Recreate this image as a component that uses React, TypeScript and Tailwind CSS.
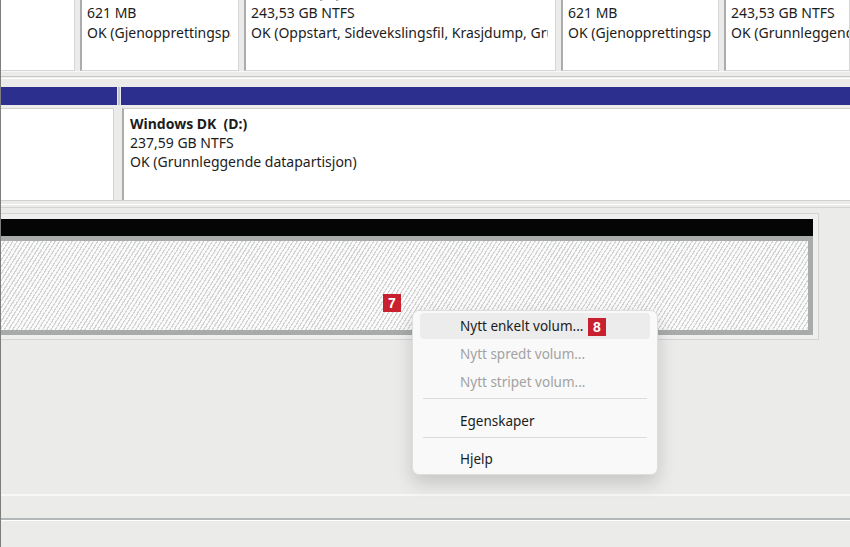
import React from "react";

type PartProps = {
  w?: string;
  name?: string;
  size: string;
  status: string;
};

const TopPart = ({ w, name, size, status }: PartProps) => (
  <div
    className={`${w ? `${w} shrink-0` : "flex-1 min-w-0"} h-full bg-white border-l-2 border-[#acacac] border-r border-r-[#d6d6d6] border-b border-b-[#d6d6d6] pl-[5px]`}
  >
    <div className={`${w ? "mr-[7px]" : "mr-0"} h-full overflow-hidden whitespace-nowrap leading-[20px]`}>
      <div className="-mt-[17px] font-bold">{name ?? "\u00a0"}</div>
      <div>{size}</div>
      <div>{status}</div>
    </div>
  </div>
);

const Badge = ({ n }: { n: string }) => (
  <div className="w-[18px] h-[18px] bg-[#c8202e] text-white font-bold text-[14px] leading-[18px] text-center font-['Liberation_Sans']">
    {n}
  </div>
);

type MenuItemProps = {
  label: string;
  disabled?: boolean;
  active?: boolean;
};

const MenuItem = ({ label, disabled, active }: MenuItemProps) => (
  <div className="h-[28px] px-[7px] py-px">
    <div
      className={`h-[26px] rounded-[4px] pl-[40px] flex items-center ${
        active ? "bg-[#ececec]" : ""
      } ${disabled ? "text-[#a2a2a2]" : "text-[#1b1b1b]"}`}
    >
      {label}
    </div>
  </div>
);

const Separator = ({ top = "mt-[2px]" }: { top?: string }) => (
  <div className={`${top} mb-[8px] mx-[10px] h-px bg-[#dcdcdc]`} />
);

export default function App() {
  return (
    <div className="relative w-[850px] h-[547px] overflow-hidden bg-[#ebebea] border-l border-[#7d7d7d] font-['Noto_Sans'] text-[14px] text-[#1c1c1c]">
      {/* top row of partitions */}
      <div className="flex h-[71px] gap-[5px]">
        <div className="w-[74px] shrink-0 h-full bg-white border-r border-[#d6d6d6] border-b border-b-[#d6d6d6]" />
        <TopPart w="w-[159px]" size="621 MB" status="OK (Gjenopprettingspartisjon)" />
        <TopPart
          w="w-[312px]"
          name="Windows  (C:)"
          size="243,53 GB NTFS"
          status="OK (Oppstart, Sidevekslingsfil, Krasjdump, Grunnleggende datapartisjon)"
        />
        <TopPart w="w-[158px]" size="621 MB" status="OK (Gjenopprettingspartisjon)" />
        <TopPart size="243,53 GB NTFS" status="OK (Grunnleggende datapartisjon)" />
      </div>
      <div className="h-[16px] border-t border-[#f7f7f7]">
        <div className="mt-[4px] h-[3px] border-t border-[#cbcbcb] border-b border-b-white" />
      </div>

      {/* second disk header */}
      <div className="flex h-[18px]">
        <div className="w-[116px] shrink-0 bg-[#2c2f8e]" />
        <div className="w-[4px] shrink-0 bg-[#c4c4c8] border-x border-[#e9e9ee]" />
        <div className="flex-1 bg-[#2c2f8e]" />
      </div>
      <div className="flex h-[95px] pt-[3px] gap-[8px]">
        <div className="w-[113px] shrink-0 h-full bg-white border-t border-[#d2d2d2] border-r border-r-[#d2d2d2]" />
        <div className="flex-1 min-w-0 h-full bg-white border-t border-[#d2d2d2] border-l-2 border-l-[#acacac] pl-[6px] pt-[5px] leading-[19px]">
          <div className="font-bold">Windows DK&nbsp;&nbsp;(D:)</div>
          <div>237,59 GB NTFS</div>
          <div>OK (Grunnleggende datapartisjon)</div>
        </div>
      </div>
      <div className="h-[13px] border-t border-[#d0d0d0]">
        <div className="mt-[3px] h-[4px] border-t border-white border-b border-b-[#d4d4d4]" />
      </div>

      {/* unallocated disk */}
      <div className="w-[818px] h-[127px] border border-[#d4d4d4] border-l-0 bg-[#efefef] pt-[5px] pr-[5px] pb-[4px] flex flex-col">
        <div className="h-[17px] bg-[#050505]" />
        <div className="flex-1 border-[5px] border-l-0 border-[#a9abab] bg-[repeating-linear-gradient(122deg,#fafafa_0px,#fafafa_2.4px,#d3d4d4_2.4px,#d3d4d4_3.6px)]" />
      </div>

      {/* lower lines */}
      <div className="mt-[154px] h-[2px] bg-[#f7f7f7]" />
      <div className="mt-[22px] h-[2px] bg-[#b3b7b7]" />
      <div className="h-px bg-white" />

      {/* annotation 7 */}
      <div className="absolute left-[382px] top-[294px]">
        <Badge n="7" />
      </div>

      {/* context menu */}
      <div className="absolute left-[411px] top-[310px] w-[246px] h-[165px] rounded-[7px] border border-[#dedede] bg-[#f9f9f9] shadow-[0_8px_18px_rgba(0,0,0,0.16)] pt-px text-[13.5px]">
        <MenuItem label="Nytt enkelt volum..." active />
        <MenuItem label="Nytt spredt volum..." disabled />
        <MenuItem label="Nytt stripet volum..." disabled />
        <Separator />
        <MenuItem label="Egenskaper" />
        <Separator top="mt-[2px]" />
        <div className="-mt-px">
          <MenuItem label="Hjelp" />
        </div>
        <div className="absolute left-[175px] top-[7px]">
          <Badge n="8" />
        </div>
      </div>
    </div>
  );
}
